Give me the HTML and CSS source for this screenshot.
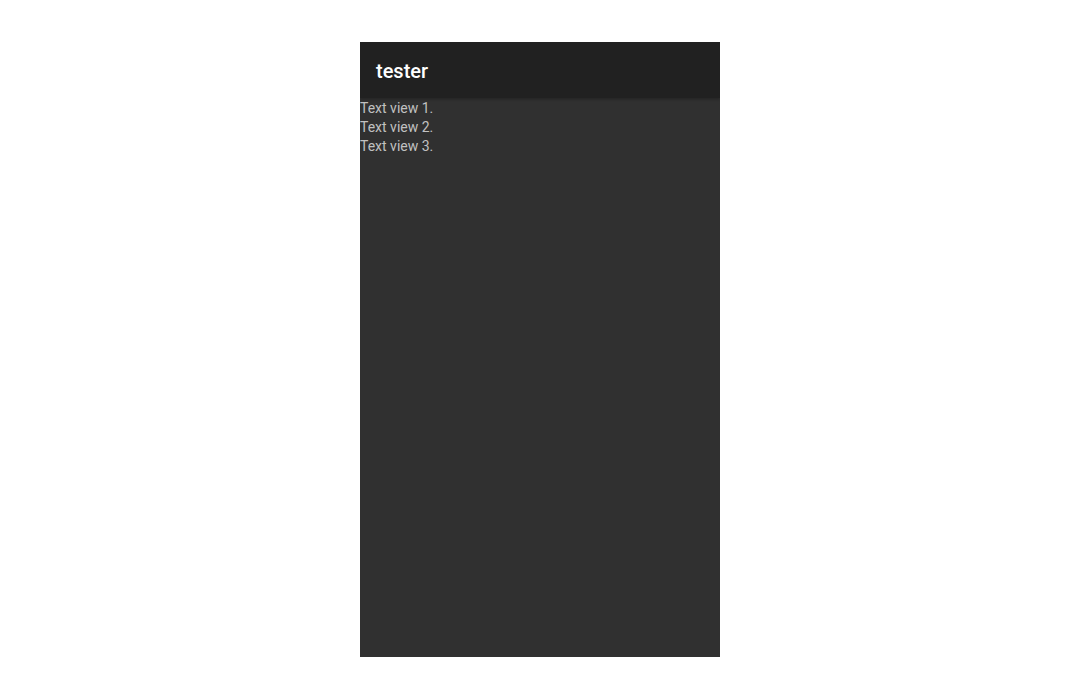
FILE: index.html
```html
<!DOCTYPE html>
<html lang="en">
<head>
<meta charset="utf-8">
<meta name="viewport" content="width=device-width, initial-scale=1">
<title>tester</title>
<link rel="stylesheet" href="styles.css">
</head>
<body>
<div class="screen">
  <header class="app-bar">
    <h1 class="app-title">tester</h1>
  </header>
  <main class="content">
    <p class="text-view">Text view 1.</p>
    <p class="text-view">Text view 2.</p>
    <p class="text-view">Text view 3.</p>
  </main>
</div>
</body>
</html>
```
FILE: styles.css
```css
* {
  box-sizing: border-box;
}

body {
  margin: 0;
  min-height: 100vh;
  padding: 42px 16px 43px;
  display: flex;
  justify-content: center;
  background: #fff;
  font-family: Roboto, sans-serif;
}

.screen {
  width: 100%;
  max-width: 360px;
  display: flex;
  flex-direction: column;
  background: #303030;
}

.app-bar {
  padding: 17px 16px 15px;
  background: #212121;
  box-shadow: 0 1px 3px rgba(0, 0, 0, 0.3);
  clip-path: inset(0 0 -6px 0);
}

.app-title {
  margin: 0;
  font-size: 20px;
  line-height: 24px;
  font-weight: 500;
  color: #fff;
}

.content {
  padding-top: 1px;
}

.text-view {
  margin: 0;
  font-size: 14px;
  line-height: 19px;
  color: #c1c1c1;
}
```
